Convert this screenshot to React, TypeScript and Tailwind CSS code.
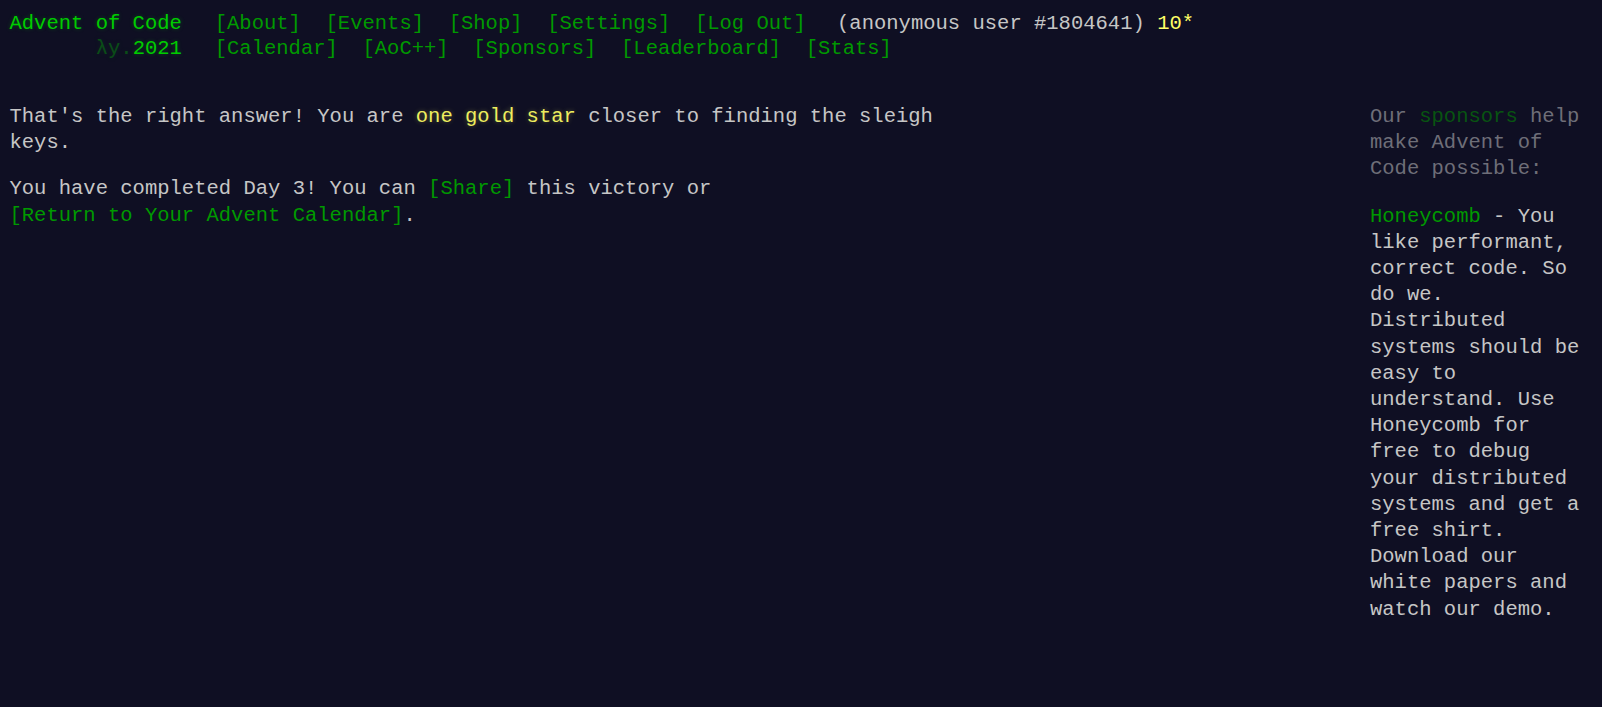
import React from "react";

const glow = "[text-shadow:0_0_4px_rgba(0,204,0,0.3)]";

function Nav({ items }: { items: string[] }) {
  return (
    <nav className="flex">
      {items.map((it) => (
        <span key={it} className="px-[0.6em] text-[#009900]">
          {it}
        </span>
      ))}
    </nav>
  );
}

export default function App() {
  return (
    <div className="min-h-[707px] w-full bg-[#0f0f23] font-['Liberation_Mono','DejaVu_Sans_Mono',monospace] text-[20.53px] text-[#c6c6c6]">
      <div className="pl-[9.5px] pr-[12px] pt-[10.5px]">
        <header className="whitespace-pre leading-[25px]">
          <div className="flex">
            <h1 className={`pr-[1em] font-normal text-[#00cc00] ${glow}`}>Advent of Code</h1>
            <Nav items={["[About]", "[Events]", "[Shop]", "[Settings]", "[Log Out]"]} />
            <div className="ml-[19px]">
              (anonymous user #1804641) <span className="text-[#ffff66]">10*</span>
            </div>
          </div>
          <div className="flex">
            <h1 className={`pr-[1em] font-normal text-[#00cc00] ${glow}`}>
              {"       "}
              <span className="opacity-[0.33]">λy.</span>
              2021
            </h1>
            <Nav items={["[Calendar]", "[AoC++]", "[Sponsors]", "[Leaderboard]", "[Stats]"]} />
          </div>
        </header>
        <div className="mt-[43px] flex justify-between">
          <main className="w-[950px] leading-[26.5px]">
            <p>
              That's the right answer! You are{" "}
              <span className="text-[#eeee5e] [text-shadow:0_0_5px_rgba(255,255,102,0.3)]">one gold star</span>{" "}
              closer to finding the sleigh keys.
            </p>
            <p className="mt-[19.5px]">
              You have completed Day 3! You can <span className="text-[#009900]">[Share]</span> this victory or{" "}
              <span className="whitespace-nowrap text-[#009900]">[Return to Your Advent Calendar]</span>.
            </p>
          </main>
          <aside className="w-[220px] shrink-0">
            <div className="leading-[26px] text-[#6e6e78]">
              Our <span className="text-[#085411]">sponsors</span> help make Advent of Code possible:
            </div>
            <div className="mt-[22px] leading-[26.2px]">
              <span className="text-[#009900]">Honeycomb</span> - You like performant, correct code. So do we.
              Distributed systems should be easy to understand. Use Honeycomb for free to debug your distributed
              systems and get a free shirt. Download our white papers and watch our demo.
            </div>
          </aside>
        </div>
      </div>
    </div>
  );
}
